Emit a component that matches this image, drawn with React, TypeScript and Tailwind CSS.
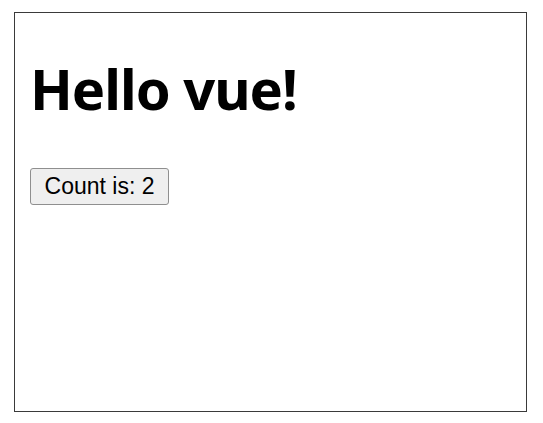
const App = () => {
  return (
    <div className="min-h-screen bg-white pt-[12px] pl-[14px]">
      <div className="w-[513px] h-[400px] border border-[#3a3a3a] bg-white pl-[15px]">
        <h1 className="mt-[47px] text-[56px] leading-[56px] font-bold tracking-[-1px] text-black font-['Noto_Sans','Open_Sans',sans-serif]">
          Hello vue!
        </h1>
        <button className="mt-[52px] h-[37px] w-[139px] bg-[#efefef] border border-[#8f8f8f] rounded-[3px] text-[23px] leading-[23px] text-black font-['Liberation_Sans',Arial,sans-serif]">
          Count is: 2
        </button>
      </div>
    </div>
  );
};

export default App;
